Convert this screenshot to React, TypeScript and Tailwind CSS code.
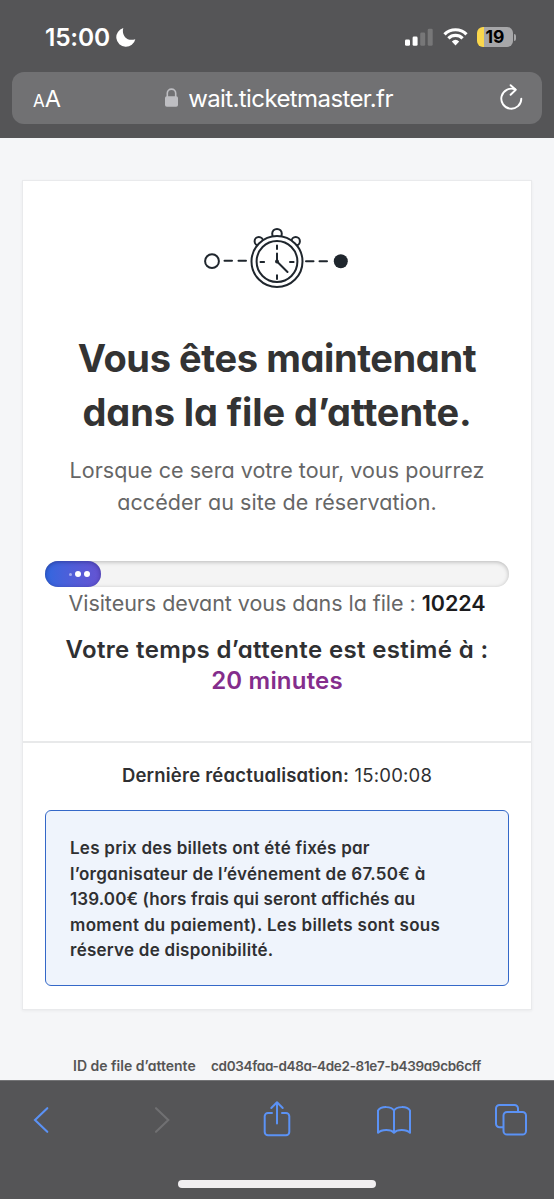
import React from 'react';

const NOTICE_LINES = [
    { text: 'Les prix des billets ont été fixés par', className: 'tracking-[0.25px]' },
    { text: 'l’organisateur de l’événement de 67.50€ à', className: 'tracking-[0.26px]' },
    { text: '139.00€ (hors frais qui seront affichés au', className: 'tracking-[0.12px]' },
    { text: 'moment du paiement). Les billets sont sous', className: 'tracking-[0.32px]' },
    { text: 'réserve de disponibilité.', className: 'tracking-[0.25px]' },
];

const StatusBar = () => (
    <div className="flex h-[72px] items-center justify-between pl-[45px] pr-[38px] pt-0.5">
        <div className="flex items-center gap-1.5">
            <span className="text-[24.5px] font-semibold leading-none tracking-[-0.2px]">15:00</span>
            <svg width="20" height="20" viewBox="0 0 20 20" fill="currentColor">
                <path d="M7.3 1C5.3 7.8 10.4 15.1 19.3 12.2A9.6 9.6 0 1 1 7.3 1Z" />
            </svg>
        </div>
        <div className="flex items-center">
            <svg className="mr-[10px]" width="29" height="19" viewBox="0 0 29 19" fill="currentColor">
                <rect x="1" y="11.5" width="5" height="6.3" rx="1.4" />
                <rect x="8.6" y="8.5" width="5" height="9.3" rx="1.4" />
                <rect x="16.2" y="4.5" width="5" height="13.3" rx="1.4" opacity="0.2" />
                <rect x="23.7" y="0.7" width="5" height="17.1" rx="1.4" opacity="0.2" />
            </svg>
            <svg className="mr-[9px]" width="25" height="18" viewBox="0 0 25 18" fill="none" stroke="currentColor" strokeWidth="3.2">
                <path d="M1.5 6.3a15.6 15.6 0 0 1 22 0" />
                <path d="M5.4 10.4a10 10 0 0 1 14.2 0" />
                <path d="M8.8 13.5a5.6 5.6 0 0 1 7.4 0L12.5 17.5Z" fill="currentColor" stroke="none" />
            </svg>
            <div className="flex h-5 w-9 items-center justify-center rounded-[6px] bg-linear-to-r from-[#fbd74c] from-[19%] to-[#a7a7a9] to-[19%] text-[17.5px] font-bold leading-none text-black">
                19
            </div>
            <div className="ml-px h-[7px] w-[2px] rounded-r-full bg-[#a7a7a9]" />
        </div>
    </div>
);

const AddressBar = () => (
    <div className="mx-3 grid h-[52px] grid-cols-[1fr_auto_1fr] items-center rounded-[12px] bg-[#717173] pl-[21px] pr-[18px]">
        <div className="flex items-baseline pt-0.5 leading-none">
            <span className="text-[17px]">A</span>
            <span className="text-[23.5px]">A</span>
        </div>
        <div className="flex items-center gap-[9px]">
            <svg width="15" height="20" viewBox="0 0 15 20" fill="#bebec2">
                <rect x="1" y="8.3" width="13" height="10.5" rx="1.8" />
                <path d="M3.3 9V5.3a4.2 4.2 0 0 1 8.4 0V9" fill="none" stroke="#bebec2" strokeWidth="1.6" />
            </svg>
            <span className="pt-0.5 text-[24px] leading-none tracking-[-0.6px]">wait.ticketmaster.fr</span>
        </div>
        <svg className="justify-self-end" width="26" height="28" viewBox="0 0 26 28" fill="none" stroke="currentColor" strokeWidth="1.9" strokeLinecap="round" strokeLinejoin="round">
            <path d="M17 5.4A10 10 0 1 0 23.3 14.6" />
            <path d="M12.600 1.200L17.800 5.700L12.600 10.800" />
        </svg>
    </div>
);

const WaitingIcon = () => (
    <svg width="146" height="62" viewBox="0 0 146 62" fill="none" stroke="#1f262d" strokeWidth="2">
        <circle cx="8" cy="34.2" r="6.9" />
        <path d="M20.5 33.7h7.5M34.5 33.7h7.5M102 34.2h7.5M115.5 34.2h7.5" strokeLinecap="round" />
        <circle cx="73" cy="6.7" r="4.8" />
        <circle cx="54.8" cy="14.2" r="4.2" />
        <circle cx="91.7" cy="14.2" r="4.2" />
        <circle cx="73" cy="34.5" r="25.500" fill="#fff" />
        <circle cx="73" cy="34.500" r="20.400" />
        <path d="M73 18.500v3.600M73 48.300v3.600M56.500 34.900h3.600M86 34.900h3.600" strokeLinecap="round" />
        <path d="M73 26.500v8L83.500 45" strokeLinecap="round" />
        <circle cx="73" cy="34.500" r="2" fill="#1f262d" stroke="none" />
        <circle cx="136.800" cy="34.300" r="7" fill="#1f262d" stroke="none" />
    </svg>
);

const ProgressBar = () => (
    <div className="h-[26px] w-[464px] rounded-full bg-[#f4f4f4] shadow-[inset_0_1px_4px_rgba(0,0,0,0.25)]">
        <div className="flex h-full w-14 items-center justify-end gap-[3px] rounded-full bg-linear-to-r from-[#3067df] to-[#6553d2] pr-[11px] shadow-[inset_0_1px_4px_rgba(20,20,90,0.45)]">
            <span className="size-[3px] rounded-full bg-[#a5acee]" />
            <span className="size-[6px] rounded-full bg-white" />
            <span className="size-[6px] rounded-full bg-white" />
        </div>
    </div>
);

const Toolbar = () => (
    <div className="flex h-[119px] flex-col items-center border-t border-[#747476] bg-[#555557]">
        <div className="flex h-[77px] w-full items-center pl-[32px]">
            <svg width="18" height="28" viewBox="0 0 18 28" fill="none" stroke="#5b92f5" strokeWidth="2.1" strokeLinecap="round">
                <path d="M15.3 2.2L3 14L15.3 25.8" />
            </svg>
            <svg className="ml-[103px]" width="18" height="28" viewBox="0 0 18 28" fill="none" stroke="#707072" strokeWidth="2.1" strokeLinecap="round">
                <path d="M3 2.2L15.3 14L3 25.8" />
            </svg>
            <svg className="-mt-0.5 ml-[91px]" width="30" height="38" viewBox="0 0 30 38" fill="none" stroke="#5b92f5" strokeWidth="2" strokeLinecap="round" strokeLinejoin="round">
                <path d="M10 13H6a3.300 3.300 0 0 0-3.300 3.300V32a3.300 3.300 0 0 0 3.300 3.300h18a3.300 3.300 0 0 0 3.300-3.300V16.300a3.300 3.300 0 0 0-3.300-3.300H20" />
                <path d="M15 23.500V2.500M9.300 8L15 2.300L20.700 8" />
            </svg>
            <svg className="ml-[84px]" width="36" height="30" viewBox="0 0 36 30" fill="none" stroke="#5b92f5" strokeWidth="2" strokeLinejoin="round">
                <path d="M18 5.500C15.500 1.200 5 .8 2 5.500V27.800C5.500 24 15 24 18 27.800C21 24 30.500 24 34 27.800V5.500C31 .8 20.500 1.200 18 5.500ZV27.800" />
            </svg>
            <svg className="ml-[82px]" width="34" height="34" viewBox="0 0 34 34" fill="none" stroke="#5b92f5" strokeWidth="2">
                <rect x="9.500" y="9" width="22.500" height="22.500" rx="3.600" />
                <path d="M9.500 24.300H5.500A3.500 3.500 0 0 1 2 20.800V5.500A3.500 3.500 0 0 1 5.500 2H20.500A3.500 3.500 0 0 1 24 5.500V9" />
            </svg>
        </div>
        <div className="mt-[22px] h-2 w-[198px] rounded-full bg-[#f1eff1]" />
    </div>
);

const App = () => {
    return (
        <div className="flex h-[1199px] w-[554px] flex-col overflow-hidden whitespace-nowrap bg-[#f5f6f8] font-['Inter',sans-serif]">
            <header className="h-[138px] shrink-0 bg-[#555557] text-white">
                <StatusBar />
                <AddressBar />
            </header>

            <main className="flex h-[942px] shrink-0 flex-col items-center pt-[42px] [font-feature-settings:'cv11']">
                <section className="h-[830px] w-[510px] border border-[#e9eaec] bg-white text-center text-[#2f3032] shadow-[0_1px_3px_rgba(0,0,0,0.05)]">
                    <div className="flex h-[562px] flex-col items-center border-b-2 border-[#e8e9ea] pt-[45.5px]">
                        <WaitingIcon />
                        <h1 className="mt-[42.5px] text-[38px] font-bold leading-[54px] text-[#333]">
                            <span className="block tracking-[-0.4px]">Vous êtes maintenant</span>
                            <span className="block tracking-[-0.1px]">dans la file d’attente.</span>
                        </h1>
                        <p className="mt-4 text-[21.5px] leading-[31.5px] text-[#666]">
                            <span className="block tracking-[0.03px]">Lorsque ce sera votre tour, vous pourrez</span>
                            <span className="block tracking-[0.08px]">accéder au site de réservation.</span>
                        </p>
                        <div className="mt-[43px]">
                            <ProgressBar />
                        </div>
                        <p className="text-[21.5px] leading-[32px] tracking-[-0.04px] text-[#666]">
                            Visiteurs devant vous dans la file : <b className="font-semibold text-[#1c1c1e]">10224</b>
                        </p>
                        <p className="mt-[15px] text-[24px] font-semibold leading-[31px] tracking-[0.36px]">
                            Votre temps d’attente est estimé à :
                        </p>
                        <p className="text-[24px] font-semibold leading-[32px] tracking-[0.2px] text-[#842d8c]">20 minutes</p>
                    </div>
                    <p className="mt-[17px] text-[18.5px] leading-[30px] tracking-[0.2px]">
                        <b className="font-semibold">Dernière réactualisation:</b> 15:00:08
                    </p>
                    <div className="mx-[22px] mt-[20px] h-[176px] rounded-[6px] border border-[#3468c8] bg-[#eff4fc] pl-[24px] pt-[25px] text-left text-[17px] font-semibold leading-[25.6px]">
                        {NOTICE_LINES.map((line) => (
                            <p key={line.text} className={line.className}>{line.text}</p>
                        ))}
                    </div>
                </section>
                <div className="mt-[46px] flex w-full items-center pl-[73px] text-[14px] font-semibold leading-5 text-[#555]">
                    <span className="w-[138px]">ID de file d’attente</span>
                    <span className="text-[13.5px] tracking-[-0.32px]">cd034faa-d48a-4de2-81e7-b439a9cb6cff</span>
                </div>
            </main>

            <Toolbar />
        </div>
    );
};

export default App;
